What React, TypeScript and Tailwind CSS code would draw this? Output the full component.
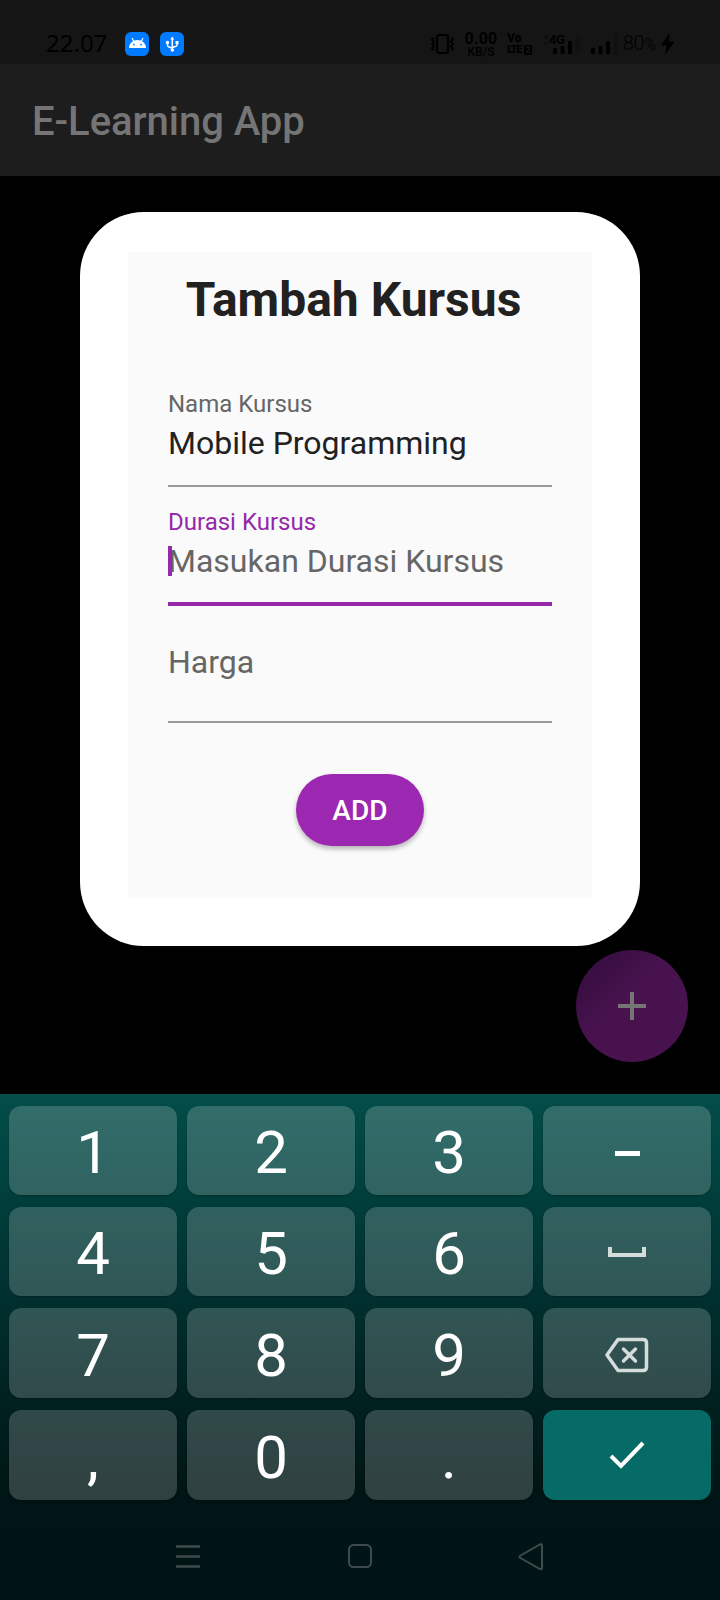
import React from "react";

function Key({ children, className = "" }: { children: React.ReactNode; className?: string }) {
  return (
    <div className={"flex items-center justify-center rounded-[12px] shadow-[0_1px_2px_rgba(0,0,0,0.25)] " + (className || "bg-[rgba(255,255,255,0.19)]")}>
      {children}
    </div>
  );
}

function Digit({ label }: { label: string }) {
  return (
    <Key>
      <span className="pt-[5px] text-[60px] leading-none font-normal text-white">{label}</span>
    </Key>
  );
}

function Signal() {
  return (
    <svg width="27" height="20" viewBox="0 0 27 20" className="block">
      <rect x="0" y="14" width="4" height="6" rx="1" fill="#000" />
      <rect x="7.5" y="12" width="4" height="8" rx="1" fill="#000" />
      <rect x="15" y="7" width="4" height="13" rx="1" fill="#000" />
      <rect x="22.5" y="0" width="4" height="20" rx="1" fill="#111" />
    </svg>
  );
}

function StatusBar() {
  return (
    <div className="flex h-16 items-start bg-[#151515] text-black">
      <div className="ml-[46px] mt-[26px] w-[79px] font-['Noto_Sans'] text-[24px] leading-[34px]">22.07</div>
      <svg width="59" height="24" viewBox="0 0 59 24" className="mt-8 block">
        <rect width="24" height="24" rx="6" fill="#007bff" />
        <path d="M4 16a8.5 8 0 0 1 17 0z" fill="#fff" />
        <path d="M7 6l2 4M18 6l-2 4" stroke="#fff" strokeWidth="1.2" />
        <circle cx="9" cy="12.6" r="0.9" fill="#007bff" />
        <circle cx="16" cy="12.6" r="0.9" fill="#007bff" />
        <rect x="35" width="24" height="24" rx="6" fill="#007bff" />
        <path d="M47.3 6v12M42.5 11v2.500q0 1 1.500 1.500l3.300 1M52 11v2q0 1-1.500 1.500l-3.200 1" stroke="#fff" strokeWidth="1.5" fill="none" />
        <path d="M45.3 7.500l2-3 2 3zM50.500 9h3v3h-3z" fill="#fff" />
        <circle cx="42.5" cy="10.5" r="1.7" fill="#fff" />
        <circle cx="47.3" cy="18" r="1.8" fill="#fff" />
      </svg>
      <svg width="24" height="22" viewBox="0 0 24 22" className="ml-[247px] mt-[33px] block" fill="none" stroke="#000">
        <rect x="6" y="2" width="11" height="18" rx="2.5" strokeWidth="2.2" />
        <path d="M2.500 4.500L1 6.500l2 2.200-2 2.300 2 2.300-2 2.200 1.500 2M20.500 4.500l1.500 2-2 2.200 2 2.300-2 2.300 2 2.200-1.500 2" strokeWidth="2" />
      </svg>
      <div className="ml-[9px] mt-[31px] flex w-[34px] flex-col items-center font-['Roboto'] font-bold">
        <span className="text-[16px] leading-[16px] tracking-[0.2px]">0.00</span>
        <span className="text-[12px] leading-[10px] font-medium">KB/S</span>
      </div>
      <div className="ml-[9px] mt-[33px] flex w-[28px] flex-col font-['Roboto'] font-black">
        <span className="text-[12px] leading-[11px]">Vo</span>
        <span className="flex h-[11px] items-center leading-[11px]">
          <span className="w-[17px] text-[11px] tracking-[-1.3px]">LTE</span>
          <span className="flex h-[10px] w-[8px] items-center justify-center rounded-[1px] bg-black text-[9px] leading-[10px] text-[#151515]">2</span>
        </span>
      </div>
      <svg width="6" height="10" viewBox="0 0 6 10" className="ml-[8px] mt-[35px] block" fill="none" stroke="#0e0e0e" strokeWidth="1.5">
        <path d="M0.500 3.500L3 1l2.500 2.500M0.500 6.500L3 9l2.500-2.500" />
      </svg>
      <div className="relative ml-[4px] mt-[34px]">
        <Signal />
        <span className="absolute -left-[4px] -top-[1px] bg-[#151515] font-['Roboto'] text-[13px] leading-[13px] font-bold tracking-[-0.5px]">4G</span>
      </div>
      <div className="ml-[11px] mt-[34px]">
        <Signal />
      </div>
      <div className="ml-[5px] mt-[32px] w-[38px] whitespace-nowrap font-['Roboto'] text-[19.5px] leading-[24px] font-light tracking-[-0.2px]">
        80<span className="text-[16px]">%</span>
      </div>
      <svg width="14" height="22" viewBox="0 0 14 22" className="mt-[33px] block">
        <path d="M8.500 0L0 12.500h5.500L4 22 13.500 8.500H8z" fill="#000" />
      </svg>
    </div>
  );
}

export default function App() {
  return (
    <div className="flex h-[1600px] w-[720px] flex-col overflow-hidden bg-black font-['Roboto',sans-serif]">
      <StatusBar />
      <div className="flex h-28 items-center bg-[#1d1d1d] pt-[3px] pl-8">
        <h1 className="text-[40px] leading-none font-medium tracking-[-0.05px] text-[#757575]">E-Learning App</h1>
      </div>

      <div className="relative flex h-[918px] justify-center pt-9">
        <div className="h-[734px] w-[560px] rounded-[64px] bg-white px-12 pt-10">
          <div className="flex h-[646px] flex-col bg-[#fafafa] px-10">
            <h2 className="mt-5 pr-[13px] text-center text-[48px] leading-[56px] font-bold text-[#212121]">Tambah Kursus</h2>
            <div className="mt-[60px] flex h-[99px] flex-col border-b-2 border-[#9b9b9b]">
              <span className="mt-[1px] text-[24px] leading-[30px] text-[#666]">Nama Kursus</span>
              <span className="mt-[5px] text-[32px] leading-[38px] text-[#212121]">Mobile Programming</span>
            </div>
            <div className="mt-[19px] flex h-[100px] flex-col border-b-4 border-[#9628aa]">
              <span className="mt-[1px] text-[24px] leading-[30px] text-[#9628aa]">Durasi Kursus</span>
              <span className="relative mt-[5px] text-[32px] leading-[38px] text-[#666]">
                Masukan Durasi Kursus
                <i className="absolute left-0 top-[4px] h-[30px] w-1 bg-[#9628aa]" />
              </span>
            </div>
            <div className="flex h-[117px] flex-col border-b-2 border-[#9b9b9b] pt-[37px]">
              <span className="text-[32px] leading-[38px] text-[#666]">Harga</span>
            </div>
            <button className="mt-[51px] h-[72px] w-32 self-center rounded-full bg-[#9c27b0] pt-[2px] text-[28px] leading-none font-medium tracking-[0.1px] text-white shadow-[0_3px_5px_rgba(0,0,0,0.28)]">
              ADD
            </button>
          </div>
        </div>
        <div className="absolute left-[576px] top-[774px] flex h-28 w-28 items-center justify-center rounded-full bg-linear-to-br from-[#3b0f43] from-20% to-[#48124f] to-45%">
          <svg width="28" height="28" viewBox="0 0 28 28">
            <path d="M14 0v28M0 14h28" stroke="#757575" strokeWidth="4" />
          </svg>
        </div>
      </div>

      <div className="flex h-[506px] flex-col bg-[linear-gradient(180deg,#044d49_0px,#014542_60px,#003c39_120px,#002f2e_210px,#002322_290px,#001515_400px,#001416_506px)]">
        <div className="mt-3 grid h-[394px] grid-cols-4 grid-rows-[89px_89px_90px_90px] gap-x-[10px] gap-y-3 px-[9px]">
          <Digit label="1" />
          <Digit label="2" />
          <Digit label="3" />
          <Key>
            <svg width="25" height="11" viewBox="0 0 25 11"><rect y="6" width="25" height="5" fill="#fff" /></svg>
          </Key>
          <Digit label="4" />
          <Digit label="5" />
          <Digit label="6" />
          <Key>
            <svg width="38" height="10" viewBox="0 0 38 10"><path d="M2 0v8h34V0" fill="none" stroke="#d5dddc" strokeWidth="4" /></svg>
          </Key>
          <Digit label="7" />
          <Digit label="8" />
          <Digit label="9" />
          <Key>
            <svg width="44" height="40" viewBox="0 -5 44 40" fill="none" stroke="#d5dddc" strokeWidth="3.5" strokeLinejoin="round" strokeLinecap="round">
              <path d="M13 1.500h25q3.500 0 3.500 3.500v24q0 3.500-3.500 3.500H13L2 17z" />
              <path d="M18.500 11l12 12M30.500 11l-12 12" />
            </svg>
          </Key>
          <Digit label="," />
          <Digit label="0" />
          <Digit label="." />
          <Key className="bg-[#066b66]">
            <svg width="36" height="28" viewBox="0 0 36 28"><path d="M2 15l10 10L34 2" fill="none" stroke="#fff" strokeWidth="4" /></svg>
          </Key>
        </div>
        <div className="flex h-[100px] items-start pt-[42px]">
          <svg width="24" height="26" viewBox="0 0 24 26" className="ml-[176px]">
            <path d="M0 4.500h24M0 14.500h24M0 24.500h24" stroke="#3f4b4c" strokeWidth="2.5" />
          </svg>
          <svg width="24" height="26" viewBox="0 0 24 26" className="ml-[148px]">
            <rect x="1" y="3" width="22" height="22" rx="4.5" fill="none" stroke="#3f4b4c" strokeWidth="2" />
          </svg>
          <svg width="26" height="28" viewBox="0 0 26 28" className="ml-[146px]">
            <path d="M22 2.500q2-1 2 1.500v21.500q0 2.500-2 1.500L2.500 16q-2-1.200 0-2.500z" fill="none" stroke="#3f4b4c" strokeWidth="2" />
          </svg>
        </div>
      </div>
    </div>
  );
}
